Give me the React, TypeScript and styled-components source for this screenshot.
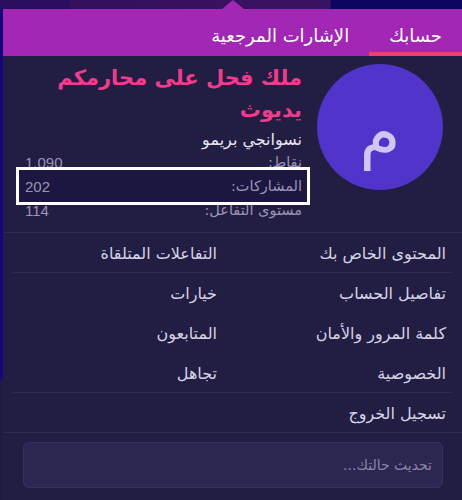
import styled, { createGlobalStyle } from "styled-components";

const GlobalStyle = createGlobalStyle`
  html, body {
    margin: 0;
    padding: 0;
    background: #1e1a40;
  }
  body {
    font-family: "DejaVu Sans", "Noto Sans", sans-serif;
  }
`;

const statRows = [
  { label: "نقاط:", value: "1,090", focused: false },
  { label: "المشاركات:", value: "202", focused: true },
  { label: "مستوى التفاعل:", value: "114", focused: false },
];

const menuGroups = [
  [["المحتوى الخاص بك", "التفاعلات المتلقاة"]],
  [
    ["تفاصيل الحساب", "خيارات"],
    ["كلمة المرور والأمان", "المتابعون"],
    ["الخصوصية", "تجاهل"],
  ],
  [["تسجيل الخروج", ""]],
];

const App = () => {
  return (
    <Page>
      <GlobalStyle />
      <Backdrop />
      <Panel dir="rtl">
        <Tabs>
          <Tab $active>حسابك</Tab>
          <Tab>الإشارات المرجعية</Tab>
        </Tabs>
        <Profile>
          <Avatar>م</Avatar>
          <Info>
            <Name>ملك فحل على محارمكم يديوث</Name>
            <Title>نسوانجي بريمو</Title>
            <Stats>
              {statRows.map((s) => (
                <StatRow key={s.label} $focused={s.focused}>
                  <span>{s.label}</span>
                  <StatValue>{s.value}</StatValue>
                </StatRow>
              ))}
            </Stats>
          </Info>
        </Profile>
        <Menu>
          {menuGroups.map((group, gi) => (
            <MenuGroup key={gi} $last={gi === menuGroups.length - 1}>
              {group.map(([a, b]) => (
                <MenuRow key={a}>
                  <MenuLink>{a}</MenuLink>
                  <MenuLink>{b}</MenuLink>
                </MenuRow>
              ))}
            </MenuGroup>
          ))}
        </Menu>
        <StatusArea>
          <StatusInput placeholder="تحديث حالتك..." />
        </StatusArea>
      </Panel>
    </Page>
  );
};

export default App;

const Page = styled.div`
  width: 462px;
  height: 500px;
  overflow: hidden;
  background: linear-gradient(to bottom, #12087a 0, #12087a 380px, #1e1a40 380px);
  display: flex;
  flex-direction: column;
`;
const Backdrop = styled.div`
  height: 9px;
  flex: none;
  background: linear-gradient(
    to right,
    #2b0d60 0,
    #2b0d60 68px,
    #35105f 70px,
    #3a1262 330px,
    #0c0660 331px
  );
`;
const Panel = styled.div`
  position: relative;
  margin-left: 3px;
  flex: 1;
  background: #221d42;
  &::before {
    content: "";
    position: absolute;
    top: -9px;
    left: 219px;
    border-left: 11px solid transparent;
    border-right: 11px solid transparent;
    border-bottom: 9px solid #a227b4;
  }
`;
const Tabs = styled.div`
  display: flex;
  height: 47px;
  background: #a227b4;
`;
const Tab = styled.div<{ $active?: boolean }>`
  padding: 9px 20px 0;
  display: flex;
  align-items: center;
  color: #fff;
  font-size: 18px;
  border-bottom: 4px solid ${(p) => (p.$active ? "#f23a78" : "transparent")};
`;
const Profile = styled.div`
  display: flex;
  gap: 10px;
  padding: 8px 19px 0 16px;
  height: 177px;
  box-sizing: border-box;
  box-shadow: inset 0 -1px 0 #2f2a55;
`;
const Avatar = styled.div`
  flex: none;
  width: 126px;
  height: 126px;
  border-radius: 50%;
  background: #5134c9;
  color: #cfc6f3;
  font-size: 66px;
  display: flex;
  align-items: center;
  justify-content: center;
  padding-top: 10px;
  box-sizing: border-box;
`;
const Info = styled.div`
  flex: 1;
  display: flex;
  flex-direction: column;
`;
const Name = styled.div`
  color: #f03c8c;
  font-size: 21px;
  font-weight: bold;
  line-height: 32px;
  margin-top: -2px;
  padding-right: 5px;
`;
const Title = styled.div`
  color: #e8e6f2;
  font-size: 16px;
  line-height: 20px;
  margin-top: 4px;
  padding-right: 5px;
`;
const Stats = styled.div`
  display: flex;
  flex-direction: column;
`;
const StatRow = styled.div<{ $focused: boolean }>`
  display: flex;
  justify-content: space-between;
  align-items: center;
  height: ${(p) => (p.$focused ? "32px" : "24px")};
  margin: ${(p) => (p.$focused ? "-4px 0" : "0")};
  padding: 0 5px 0 6px;
  font-size: 14.5px;
  color: #9a96b6;
  background: ${(p) => (p.$focused ? "#1c1740" : "transparent")};
  outline: ${(p) => (p.$focused ? "3px solid #ffffff" : "none")};
  position: relative;
  z-index: ${(p) => (p.$focused ? 1 : 0)};
`;
const StatValue = styled.span`
  font-family: "Liberation Sans", sans-serif;
  font-size: 15px;
`;
const Menu = styled.div`
  display: flex;
  flex-direction: column;
`;
const MenuGroup = styled.div<{ $last: boolean }>`
  margin: ${(p) => (p.$last ? "0" : "0 10px")};
  padding: ${(p) => (p.$last ? "0 16px" : "0 6px")};
  box-shadow: inset 0 -1px 0 #2f2a55;
`;
const MenuRow = styled.div`
  display: grid;
  grid-template-columns: 229px 1fr;
  height: 40px;
  align-items: center;
`;
const MenuLink = styled.div`
  color: #d6d3e6;
  font-size: 16px;
`;
const StatusArea = styled.div`
  padding: 9px 19px 0 20px;
`;
const StatusInput = styled.input`
  width: 100%;
  height: 46px;
  box-sizing: border-box;
  border-radius: 6px;
  border: 1px solid #363160;
  background: #2c2750;
  padding: 0 10px;
  font-family: "DejaVu Sans", sans-serif;
  font-size: 14px;
  color: #d6d3e6;
  outline: none;
  &::placeholder {
    color: #8a86a8;
  }
`;
